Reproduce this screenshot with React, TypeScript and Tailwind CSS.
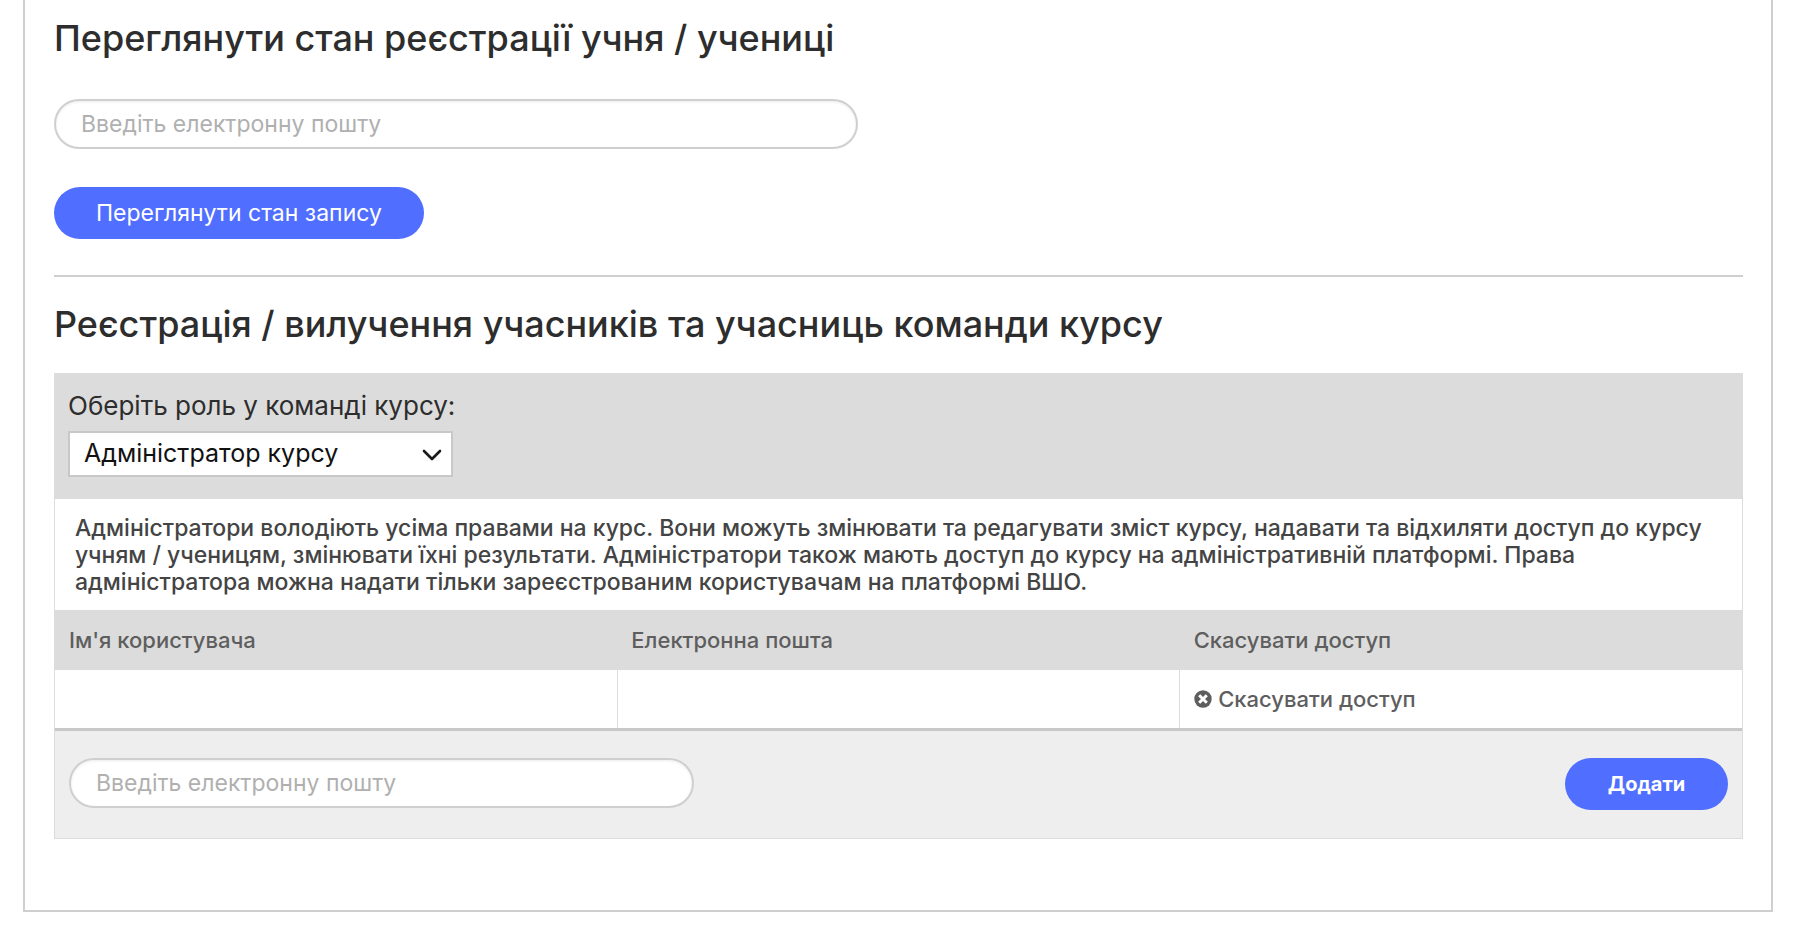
import React, { useState } from 'react';

interface Member {
  id: string;
  username: string;
  email: string;
}

const ROLES = [{ id: 'admin', label: 'Адміністратор курсу' }];

const DESCRIPTION =
  'Адміністратори володіють усіма правами на курс. Вони можуть змінювати та редагувати зміст курсу, надавати та відхиляти доступ до курсу учням / ученицям, змінювати їхні результати. Адміністратори також мають доступ до курсу на адміністративній платформі. Права адміністратора можна надати тільки зареєстрованим користувачам на платформі ВШО.';

const COLUMNS = ["Ім'я користувача", 'Електронна пошта', 'Скасувати доступ'];

const MEMBERS: Member[] = [{ id: 'm1', username: '', email: '' }];

const inputClass =
  'block h-[50px] max-w-full rounded-full border-2 border-[#cfcfcf] bg-white px-[25px] text-[23px] text-[#2d2d2d] placeholder:text-[#b0b0b0] shadow-[inset_0_1px_3px_rgba(0,0,0,0.08)] outline-none';

const buttonClass = 'h-[52px] rounded-full bg-[#506eff] text-white cursor-pointer hover:bg-[#3f5df0]';

function RevokeIcon() {
  return (
    <svg width="18" height="18" viewBox="0 0 18 18" className="shrink-0" aria-hidden="true">
      <circle cx="9" cy="9" r="8.7" fill="#5e5e5e" />
      <path d="M5.2 5.2l7.6 7.6M12.8 5.2l-7.6 7.6" stroke="#fff" strokeWidth="3" />
    </svg>
  );
}

function EnrollmentStatus() {
  const [email, setEmail] = useState('');

  return (
    <section className="border-b-2 border-[#cfcfcf] pb-9">
      <h2 className="text-[36px] leading-[44px] font-medium">Переглянути стан реєстрації учня / учениці</h2>
      <input
        type="email"
        aria-label="Електронна пошта учня / учениці"
        placeholder="Введіть електронну пошту"
        value={email}
        onChange={(e) => setEmail(e.target.value)}
        className={`${inputClass} mt-[39px] w-[804px]`}
      />
      <button type="button" className={`${buttonClass} mt-[38px] px-[42px] text-[23px]`}>
        Переглянути стан запису
      </button>
    </section>
  );
}

function TeamManagement() {
  const [role, setRole] = useState('admin');
  const [email, setEmail] = useState('');

  return (
    <section className="pt-[25px]">
      <h2 className="text-[36px] leading-[44px] font-medium">
        Реєстрація / вилучення учасників та учасниць команди курсу
      </h2>

      <div className="mt-[27px] border border-[#dcdcdc]">
        <div className="bg-[#dcdcdc] px-[13px] pt-4 pb-[22px]">
          <label htmlFor="role" className="block text-[26px] leading-8">
            Оберіть роль у команді курсу:
          </label>
          <div className="relative mt-[9px] w-[385px] max-w-full">
            <select
              id="role"
              value={role}
              onChange={(e) => setRole(e.target.value)}
              className="block h-[46px] w-full appearance-none border-2 border-[#c8c8c8] bg-white pl-[14px] pr-12 text-[25px] text-[#111]"
            >
              {ROLES.map((r) => (
                <option key={r.id} value={r.id}>{r.label}</option>
              ))}
            </select>
            <svg
              width="20" height="12" viewBox="0 0 20 12" fill="none"
              className="pointer-events-none absolute right-[11px] top-[18px]"
              aria-hidden="true"
            >
              <path d="M2 2l8 8 8-8" stroke="#1a1a1a" strokeWidth="2.6" strokeLinecap="round" strokeLinejoin="round" />
            </svg>
          </div>
        </div>

        <p className="px-5 pt-4 pb-[14px] text-[23px] leading-[27px] font-medium text-[#444]">{DESCRIPTION}</p>

        <table className="w-full table-fixed border-collapse text-left text-[22px] text-[#5e5e5e]">
          <thead>
            <tr className="h-[60px] bg-[#dcdcdc]">
              {COLUMNS.map((title) => (
                <th key={title} scope="col" className="px-[14px] font-medium">{title}</th>
              ))}
            </tr>
          </thead>
          <tbody>
            {MEMBERS.map((m) => (
              <tr key={m.id} className="h-[58px]">
                <td className="border-r border-[#dcdcdc] px-[14px]">{m.username}</td>
                <td className="border-r border-[#dcdcdc] px-[14px]">{m.email}</td>
                <td className="px-[14px]">
                  <button type="button" className="flex cursor-pointer items-center gap-[6px] font-medium">
                    <RevokeIcon />
                    Скасувати доступ
                  </button>
                </td>
              </tr>
            ))}
          </tbody>
        </table>

        <div className="flex items-start justify-between gap-4 border-t-3 border-[#c8c8c8] bg-[#eee] px-[14px] pt-[27px] pb-7">
          <input
            type="email"
            aria-label="Електронна пошта"
            placeholder="Введіть електронну пошту"
            value={email}
            onChange={(e) => setEmail(e.target.value)}
            className={`${inputClass} w-[625px]`}
          />
          <button type="button" className={`${buttonClass} w-[163px] text-[20px] font-bold`}>
            Додати
          </button>
        </div>
      </div>
    </section>
  );
}

export default function App() {
  return (
    <div className="bg-white pr-[27px] pb-9 pl-[23px] font-['Inter','Noto_Sans',sans-serif] text-[#2d2d2d]">
      <main className="border-x-2 border-b-2 border-[#cfcfcf] pt-4 pr-7 pb-[71px] pl-[29px]">
        <EnrollmentStatus />
        <TeamManagement />
      </main>
    </div>
  );
}
